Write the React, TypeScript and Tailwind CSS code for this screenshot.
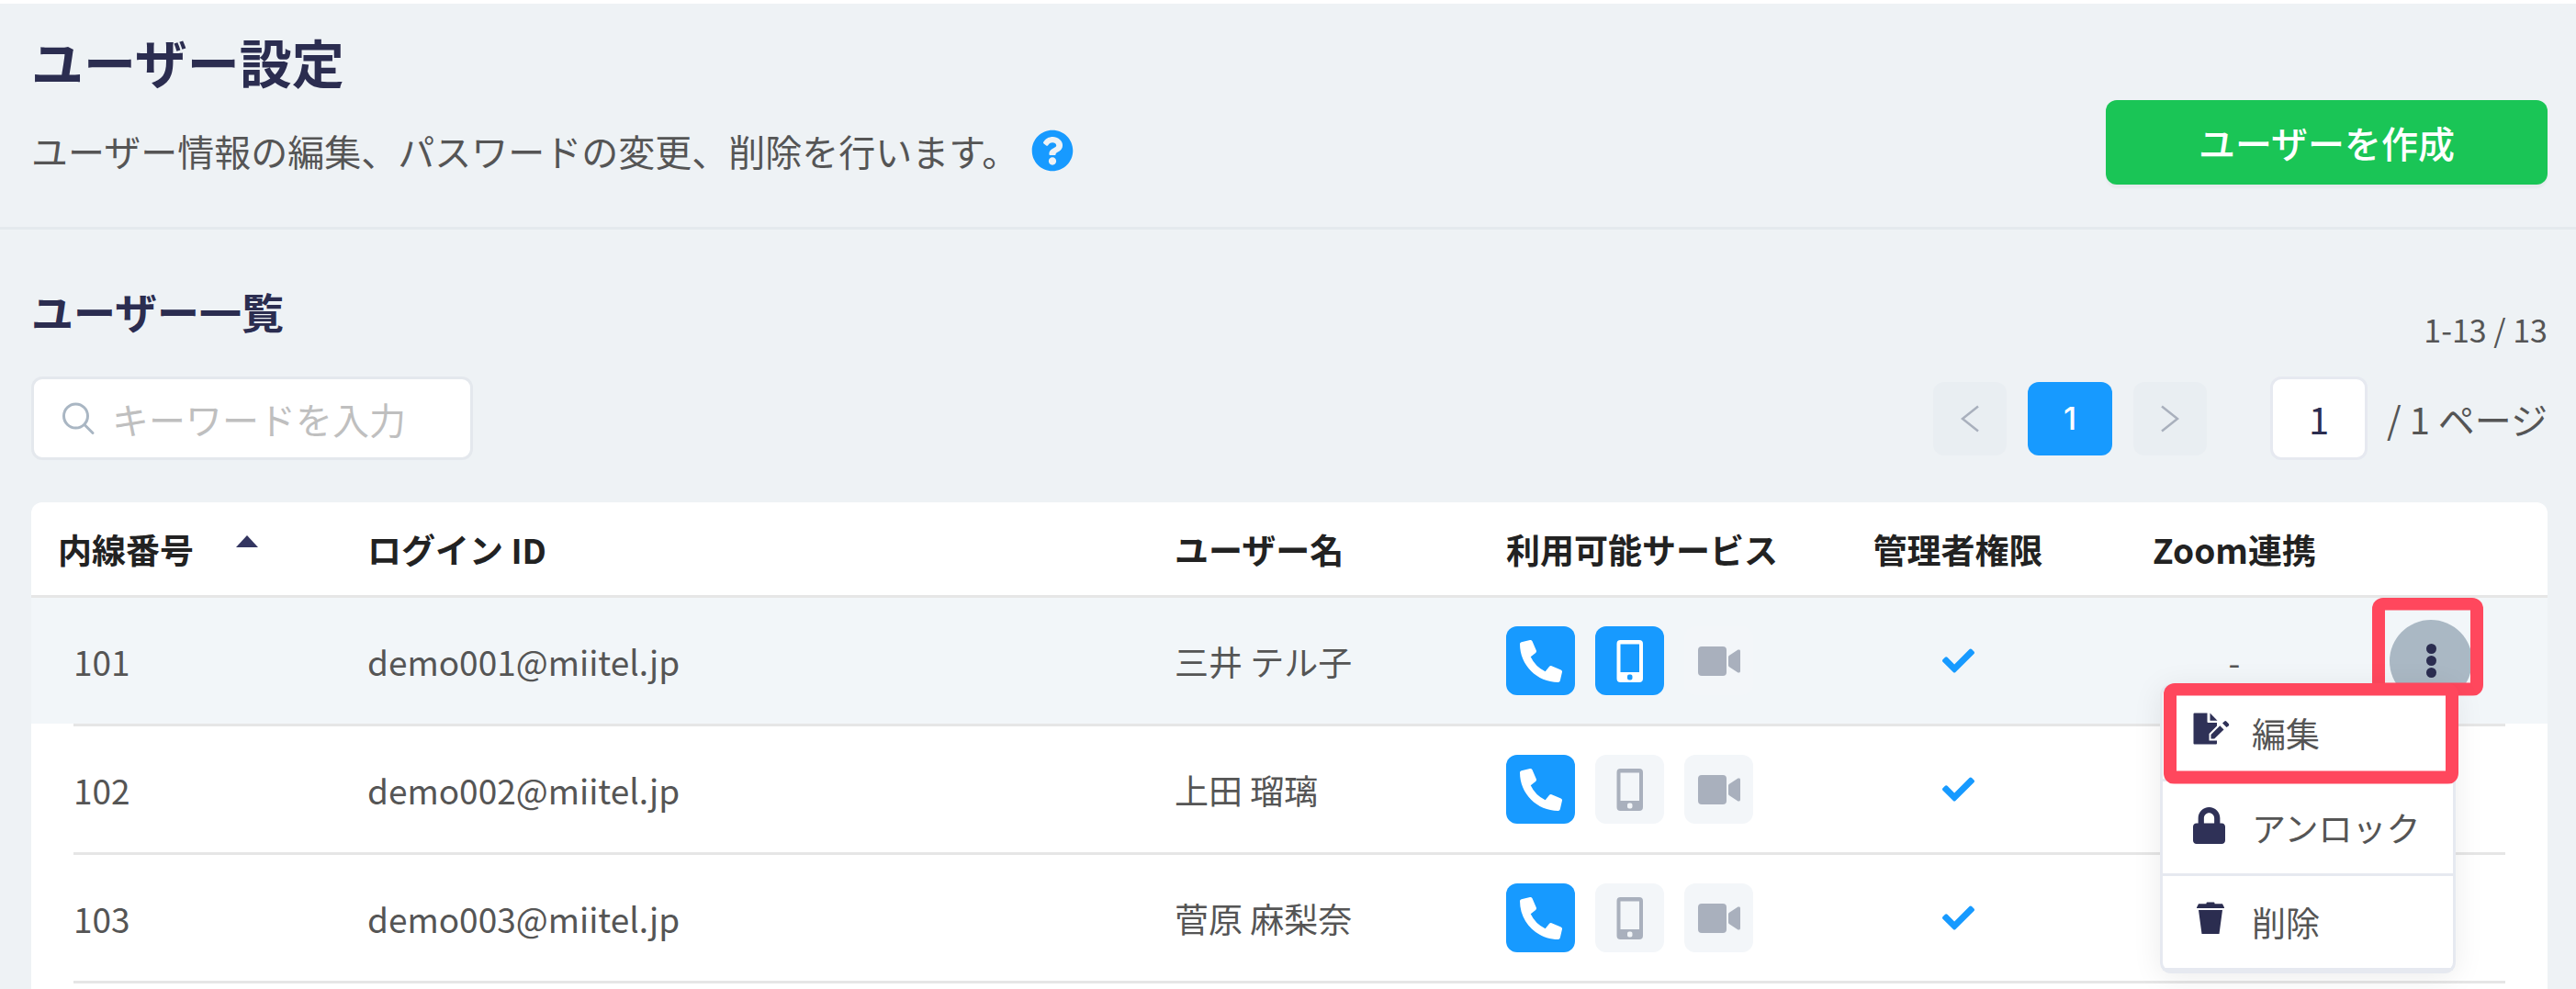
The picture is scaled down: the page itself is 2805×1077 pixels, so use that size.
import React, { useState } from "react";
import { FaCheck, FaLock, FaPhoneAlt, FaQuestionCircle } from "react-icons/fa";

const users = [
  { ext: "101", login: "demo001@miitel.jp", name: "三井 テル子", phone: true, mobile: true, video: false, admin: true, zoom: "-" },
  { ext: "102", login: "demo002@miitel.jp", name: "上田 瑠璃", phone: true, mobile: false, video: false, admin: true, zoom: "" },
  { ext: "103", login: "demo003@miitel.jp", name: "菅原 麻梨奈", phone: true, mobile: false, video: false, admin: true, zoom: "" },
];

const SearchIcon = () => (
  <svg className="size-9 shrink-0" viewBox="0 0 36 36" fill="none" stroke="#a9b6c3" strokeWidth="3" strokeLinecap="round">
    <circle cx="14.5" cy="15" r="13" />
    <path d="M24.5 25l8.500 8.500" />
  </svg>
);

const ArrowIcon = ({ next }: { next?: boolean }) => (
  <svg className="h-8 w-6" viewBox="0 0 24 32" fill="none" stroke="#a9b0bd" strokeWidth="2.500">
    <path d={next ? "M3 2.500L20 16L3 29.500" : "M21 2.500L4 16L21 29.500"} />
  </svg>
);

const MobileIcon = () => (
  <svg className="h-[46px] w-[30px]" viewBox="0 0 30 46" fill="currentColor">
    <path fillRule="evenodd" d="M4.500 0h20.500a4 4 0 0 1 4 4v38a4 4 0 0 1-4 4H4.500a4 4 0 0 1-4-4V4a4 4 0 0 1 4-4zM4.500 4.500v30.500h20.500V4.500zM14 37.500a2 2 0 0 0-2 2v2a2 2 0 0 0 2 2h1.500a2 2 0 0 0 2-2v-2a2 2 0 0 0-2-2z" />
  </svg>
);

const VideoIcon = () => (
  <svg className="h-8 w-[46px]" viewBox="0 0 46 32" fill="currentColor">
    <rect width="31" height="32" rx="4" />
    <path d="M33 11.500a2 2 0 0 1 1-1.700l9.500-6.200A1.700 1.700 0 0 1 46 5v22a1.700 1.700 0 0 1-2.500 1.400L34 22.200a2 2 0 0 1-1-1.700z" />
  </svg>
);

const EditIcon = () => (
  <svg className="h-9 w-10" viewBox="0 0 40 36" fill="#2f3157">
    <path d="M1.500.5H15.500V10a1 1 0 0 0 1 1H26v3.500L17.500 23v7.500H26v3a1 1 0 0 1-1 1H1.500a1 1 0 0 1-1-1v-32a1 1 0 0 1 1-1z" />
    <path d="M18.500 .5L26.500 8.800H18.500z" />
    <path d="M29.300 14.200l4.200 4.200L23.200 28.500h-3.700v-4.500z" />
    <path d="M32 11.500l2-1.800a1.800 1.800 0 0 1 2.500 0l2.200 2.200a1.800 1.800 0 0 1 0 2.500L36.500 16z" />
  </svg>
);

const TrashIcon = () => (
  <svg className="h-9 w-9" viewBox="-3 0 36 36" fill="#2b2d50">
    <path d="M11.500 1.500Q11.500.5 12.500.5h7q1 0 1 1v.700h8.500l2 4v.800H1v-.800l2-4h8.500zM3 9h26l-3.500 26h-19z" />
  </svg>
);

const Service = ({ on, label, children }: { on: boolean; label: string; children: React.ReactNode }) => (
  <span
    role="img"
    aria-label={label}
    className={
      "flex size-[75px] items-center justify-center rounded-xl " +
      (on ? "bg-[#179aff] text-white" : "bg-[#f3f6f9] text-[#a9b0bd]")
    }
  >
    {children}
  </span>
);

const RowMenu = () => (
  <div className="absolute top-[70px] right-[18px] z-10 w-[322px] rounded-xl border-[3px] border-[#e6e9f0] bg-white shadow-[0_4px_32px_rgba(0,0,0,0.08)]">
    {[
      { label: "編集", icon: <EditIcon /> },
      { label: "アンロック", icon: <FaLock className="h-10 w-[35px] text-[#2f3157]" /> },
      { label: "削除", icon: <TrashIcon /> },
    ].map((item) => (
      <button
        key={item.label}
        type="button"
        className="flex h-[103px] w-full items-center border-b-[3px] border-[#e6e9f0] px-[33px] text-left text-[37px] leading-[54px] whitespace-nowrap text-[#555] last:h-[100px] last:border-b-0"
      >
        <span className="flex h-11 w-16 shrink-0 items-start">{item.icon}</span>
        {item.label}
      </button>
    ))}
    {/* highlight over the first item */}
    <div className="pointer-events-none absolute -top-1 left-px h-[110px] w-[321px] rounded-xl bg-[#ff475d] [clip-path:polygon(evenodd,0_0,100%_0,100%_100%,0_100%,0_0,14px_14px,14px_96px,307px_96px,307px_14px,14px_14px)]" />
  </div>
);

const App = () => {
  const [keyword, setKeyword] = useState("");
  const [page, setPage] = useState("1");

  return (
    <div className="h-dvh overflow-hidden border-t-4 border-white bg-[#eef2f5] font-['Noto_Sans_CJK_JP',sans-serif] text-[#555]" lang="ja">
      <header className="flex items-end justify-between border-b-[3px] border-[#e4e9ed] pt-5 pr-[31px] pb-[46px] pl-[34px]">
        <div>
          <h1 className="text-[57px] leading-[84px] font-bold text-[#2b2d50]">ユーザー設定</h1>
          <div className="mt-[26px] flex items-center gap-[14px] pb-[7px]">
            <p className="text-[40px] leading-[60px]">ユーザー情報の編集、パスワードの変更、削除を行います。</p>
            <a href="#help" aria-label="ヘルプ">
              <FaQuestionCircle className="size-[46px] text-[#179aff]" />
            </a>
          </div>
        </div>
        <button type="button" className="h-[92px] w-[481px] rounded-xl bg-[#1ac556] text-[40px] leading-[60px] font-medium text-white shadow-[0_4px_2px_rgba(0,0,0,0.03)]">
          ユーザーを作成
        </button>
      </header>

      <main className="pt-[55px] pr-[31px] pl-[34px]">
        <div className="mb-[46px] flex items-end justify-between">
          <div>
            <h2 className="text-[46px] leading-[66px] font-bold text-[#2b2d50]">ユーザー一覧</h2>
            <label className="mt-[39px] flex h-[91px] w-[481px] items-center gap-[18px] rounded-xl border-[3px] border-[#e4e8ed] bg-white px-[31px]">
              <SearchIcon />
              <input
                type="text"
                aria-label="キーワード"
                className="w-full min-w-0 text-[40px] leading-[60px] outline-none placeholder:text-[#bfbfbf]"
                placeholder="キーワードを入力"
                value={keyword}
                onChange={(e) => setKeyword(e.target.value)}
              />
            </label>
          </div>
          <div className="flex flex-col items-end">
            <p className="text-[34px] leading-[50px]">1-13 / 13</p>
            <div className="mt-[26px] flex items-center text-[40px] leading-[60px]">
              <nav className="flex gap-[23px]">
                <button type="button" aria-label="前へ" className="flex size-20 items-center justify-center rounded-xl bg-[#e9eef2]">
                  <ArrowIcon />
                </button>
                <button type="button" className="h-20 w-[92px] rounded-xl bg-[#179aff] font-['Inter',sans-serif] text-[34px] font-medium text-white">
                  1
                </button>
                <button type="button" aria-label="次へ" className="flex size-20 items-center justify-center rounded-xl bg-[#e9eef2]">
                  <ArrowIcon next />
                </button>
              </nav>
              <input
                type="text"
                aria-label="ページ番号"
                className="mr-[21px] ml-[69px] h-[91px] w-[106px] rounded-xl border-[3px] border-[#e6e9f0] bg-white text-center text-[#2b2d50]"
                value={page}
                onChange={(e) => setPage(e.target.value)}
              />
              <span>/ 1 ページ</span>
            </div>
          </div>
        </div>

        <div className="h-dvh rounded-xl bg-white">
          <table className="w-full table-fixed border-separate border-spacing-0 text-left text-[37px] leading-[54px]">
            <colgroup>
              <col className="w-[46px]" />
              <col className="w-[320px]" />
              <col />
              <col className="w-[361px]" />
              <col className="w-[360px]" />
              <col className="w-[264px]" />
              <col className="w-[338px]" />
              <col className="w-[126px]" />
              <col className="w-[46px]" />
            </colgroup>
            <thead className="text-[#222] [&_th]:h-[104px] [&_th]:border-b-[3px] [&_th]:border-[#e6e6e6] [&_th]:font-bold [&_th]:whitespace-nowrap">
              <tr>
                <th colSpan={2} className="pl-[29px]" aria-sort="ascending">
                  <button type="button" className="flex gap-[46px]">
                    内線番号
                    <svg className="mt-3 h-[13px] w-6" viewBox="0 0 24 13" fill="#333560">
                      <path d="M12 0L24 13H0z" />
                    </svg>
                  </button>
                </th>
                <th>ログイン ID</th>
                <th>ユーザー名</th>
                <th>利用可能サービス</th>
                <th className="text-center">管理者権限</th>
                <th className="text-center">Zoom連携</th>
                <th colSpan={2} aria-label="操作" />
              </tr>
            </thead>
            <tbody className="[&_td]:h-[140px] [&_td]:border-b-[3px] [&_td]:border-[#e6e6e6] [&_td:first-child]:border-white [&_td:last-child]:border-white">
              {users.map((user, idx) => (
                <tr key={user.ext} className={idx === 0 ? "bg-[#f2f6f9]" : ""}>
                  <td />
                  <td>{user.ext}</td>
                  <td>{user.login}</td>
                  <td>{user.name}</td>
                  <td>
                    <div className="flex gap-[22px]">
                      <Service on={user.phone} label="電話"><FaPhoneAlt className="size-[46px]" /></Service>
                      <Service on={user.mobile} label="モバイル"><MobileIcon /></Service>
                      <Service on={user.video} label="ビデオ"><VideoIcon /></Service>
                    </div>
                  </td>
                  <td>{user.admin && <FaCheck className="mx-auto size-[35px] text-[#179aff]" />}</td>
                  <td className="text-center">{user.zoom}</td>
                  <td>
                    {idx === 0 && (
                      <div className="relative size-[90px]">
                        <button type="button" aria-label="メニュー" className="flex size-[90px] flex-col items-center justify-center gap-0.5 rounded-full bg-[#aab8c4]">
                          <i className="size-[11px] rounded-full bg-[#2b2d50]" />
                          <i className="size-[11px] rounded-full bg-[#2b2d50]" />
                          <i className="size-[11px] rounded-full bg-[#2b2d50]" />
                        </button>
                        <RowMenu />
                        <div className="pointer-events-none absolute -top-6 -left-[19px] h-[107px] w-[121px] rounded-xl bg-[#ff475d] [clip-path:polygon(evenodd,0_0,100%_0,100%_100%,0_100%,0_0,14px_14px,14px_93px,107px_93px,107px_14px,14px_14px)]" />
                      </div>
                    )}
                  </td>
                  <td />
                </tr>
              ))}
            </tbody>
          </table>
        </div>
      </main>
    </div>
  );
};

export default App;
